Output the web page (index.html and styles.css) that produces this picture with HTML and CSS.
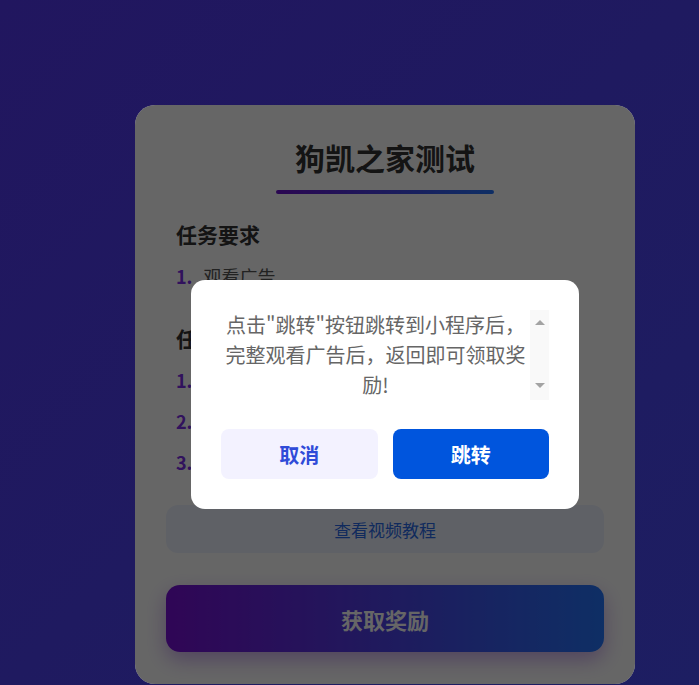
FILE: index.html
```html
<!DOCTYPE html>
<html lang="zh-CN">
<head>
<meta charset="utf-8">
<title>狗凯之家测试</title>
<link rel="stylesheet" href="styles.css">
</head>
<body>
<div class="page">
  <div class="card">
    <h1 class="title">狗凯之家测试</h1>
    <div class="title-bar"></div>

    <section class="section">
      <h2 class="section-title">任务要求</h2>
      <ol class="list">
        <li class="item"><span class="num">1.</span><span class="text">观看广告</span></li>
      </ol>
    </section>

    <section class="section section-second">
      <h2 class="section-title">任务步骤</h2>
      <ol class="list">
        <li class="item"><span class="num">1.</span><span class="text">点击获取奖励</span></li>
        <li class="item"><span class="num">2.</span><span class="text">观看广告</span></li>
        <li class="item"><span class="num">3.</span><span class="text">领取奖励</span></li>
      </ol>
    </section>

    <button class="btn-video" type="button">查看视频教程</button>
    <button class="btn-reward" type="button">获取奖励</button>

    <div class="overlay">
      <div class="modal">
        <div class="modal-body">
          <div class="modal-text">点击"跳转"按钮跳转到小程序后，完整观看广告后，返回即可领取奖励!</div>
          <div class="scroll-rail" aria-hidden="true">
            <span class="arrow arrow-up"></span>
            <span class="arrow arrow-down"></span>
          </div>
        </div>
        <div class="modal-actions">
          <button class="btn-cancel" type="button">取消</button>
          <button class="btn-jump" type="button">跳转</button>
        </div>
      </div>
    </div>
  </div>
</div>
</body>
</html>
```

FILE: styles.css
```css
* {
  box-sizing: border-box;
}

html, body {
  margin: 0;
  padding: 0;
}

body {
  min-height: 685px;
  background: linear-gradient(135deg, #21165f 0%, #1f1a60 50%, #1d1e62 100%);
  font-family: "Noto Sans CJK SC", "Noto Sans", sans-serif;
  overflow: hidden;
}

.page {
  padding: 105px 0 0 135px;
}

.card {
  position: relative;
  width: 500px;
  background: #ffffff;
  border-radius: 20px;
  padding: 30px 31px 32px 31px;
  overflow: hidden;
}

.title {
  margin: 0;
  font-size: 30px;
  line-height: 45px;
  font-weight: 700;
  color: #333333;
  text-align: center;
}

.title-bar {
  width: 218px;
  height: 4px;
  margin: 10px auto 0;
  border-radius: 2px;
  background: linear-gradient(90deg, #6a11cb, #2575fc);
}

.section {
  padding: 0 10px;
  margin-top: 24px;
}

.section-second {
  margin-top: 25px;
}

.section-title {
  margin: 0 0 5px;
  font-size: 21px;
  line-height: 33px;
  font-weight: 700;
  color: #333333;
}

.list {
  list-style: none;
  margin: 0;
  padding: 0;
}

.item {
  display: flex;
  align-items: center;
  gap: 11px;
  height: 41px;
  font-size: 18px;
  line-height: 27px;
  color: #555555;
}

.num {
  font-weight: 700;
  color: #7a2ee8;
}

.btn-video {
  display: block;
  width: 100%;
  height: 48px;
  margin-top: 22px;
  border: none;
  border-radius: 12px;
  background: #eef3ff;
  color: #2a6ae8;
  font-family: inherit;
  font-size: 17px;
}

.btn-reward {
  display: block;
  width: 100%;
  height: 67px;
  margin-top: 32px;
  border: none;
  border-radius: 14px;
  background: linear-gradient(90deg, #780fd6, #2575fc);
  color: #ffffff;
  font-family: inherit;
  font-size: 22px;
  font-weight: 700;
  box-shadow: 0 8px 20px rgba(106, 17, 203, 0.35);
}

.overlay {
  position: absolute;
  inset: 0;
  background: rgba(0, 0, 0, 0.6);
  display: flex;
  align-items: center;
  justify-content: center;
}

.modal {
  width: 388px;
  background: #ffffff;
  border-radius: 14px;
  padding: 30px;
}

.modal-body {
  display: flex;
  height: 90px;
}

.modal-text {
  flex: 1;
  min-width: 0;
  overflow: hidden;
  font-size: 20px;
  line-height: 30px;
  color: #666666;
  text-align: center;
}

.scroll-rail {
  width: 19px;
  flex: none;
  background: #f9f9f9;
  display: flex;
  flex-direction: column;
  justify-content: space-between;
  align-items: center;
  padding: 10px 0 12px;
}

.arrow {
  width: 0;
  height: 0;
  border-left: 5px solid transparent;
  border-right: 5px solid transparent;
}

.arrow-up {
  border-bottom: 5px solid #a3a3a3;
}

.arrow-down {
  border-top: 5px solid #a3a3a3;
}

.modal-actions {
  display: flex;
  gap: 15px;
  margin-top: 29px;
}

.btn-cancel,
.btn-jump {
  flex: 1;
  height: 50px;
  border: none;
  border-radius: 8px;
  font-family: inherit;
  font-size: 20px;
  font-weight: 700;
}

.btn-cancel {
  background: #f3f2ff;
  color: #2f4bd8;
}

.btn-jump {
  background: #0055dd;
  color: #ffffff;
}
```
